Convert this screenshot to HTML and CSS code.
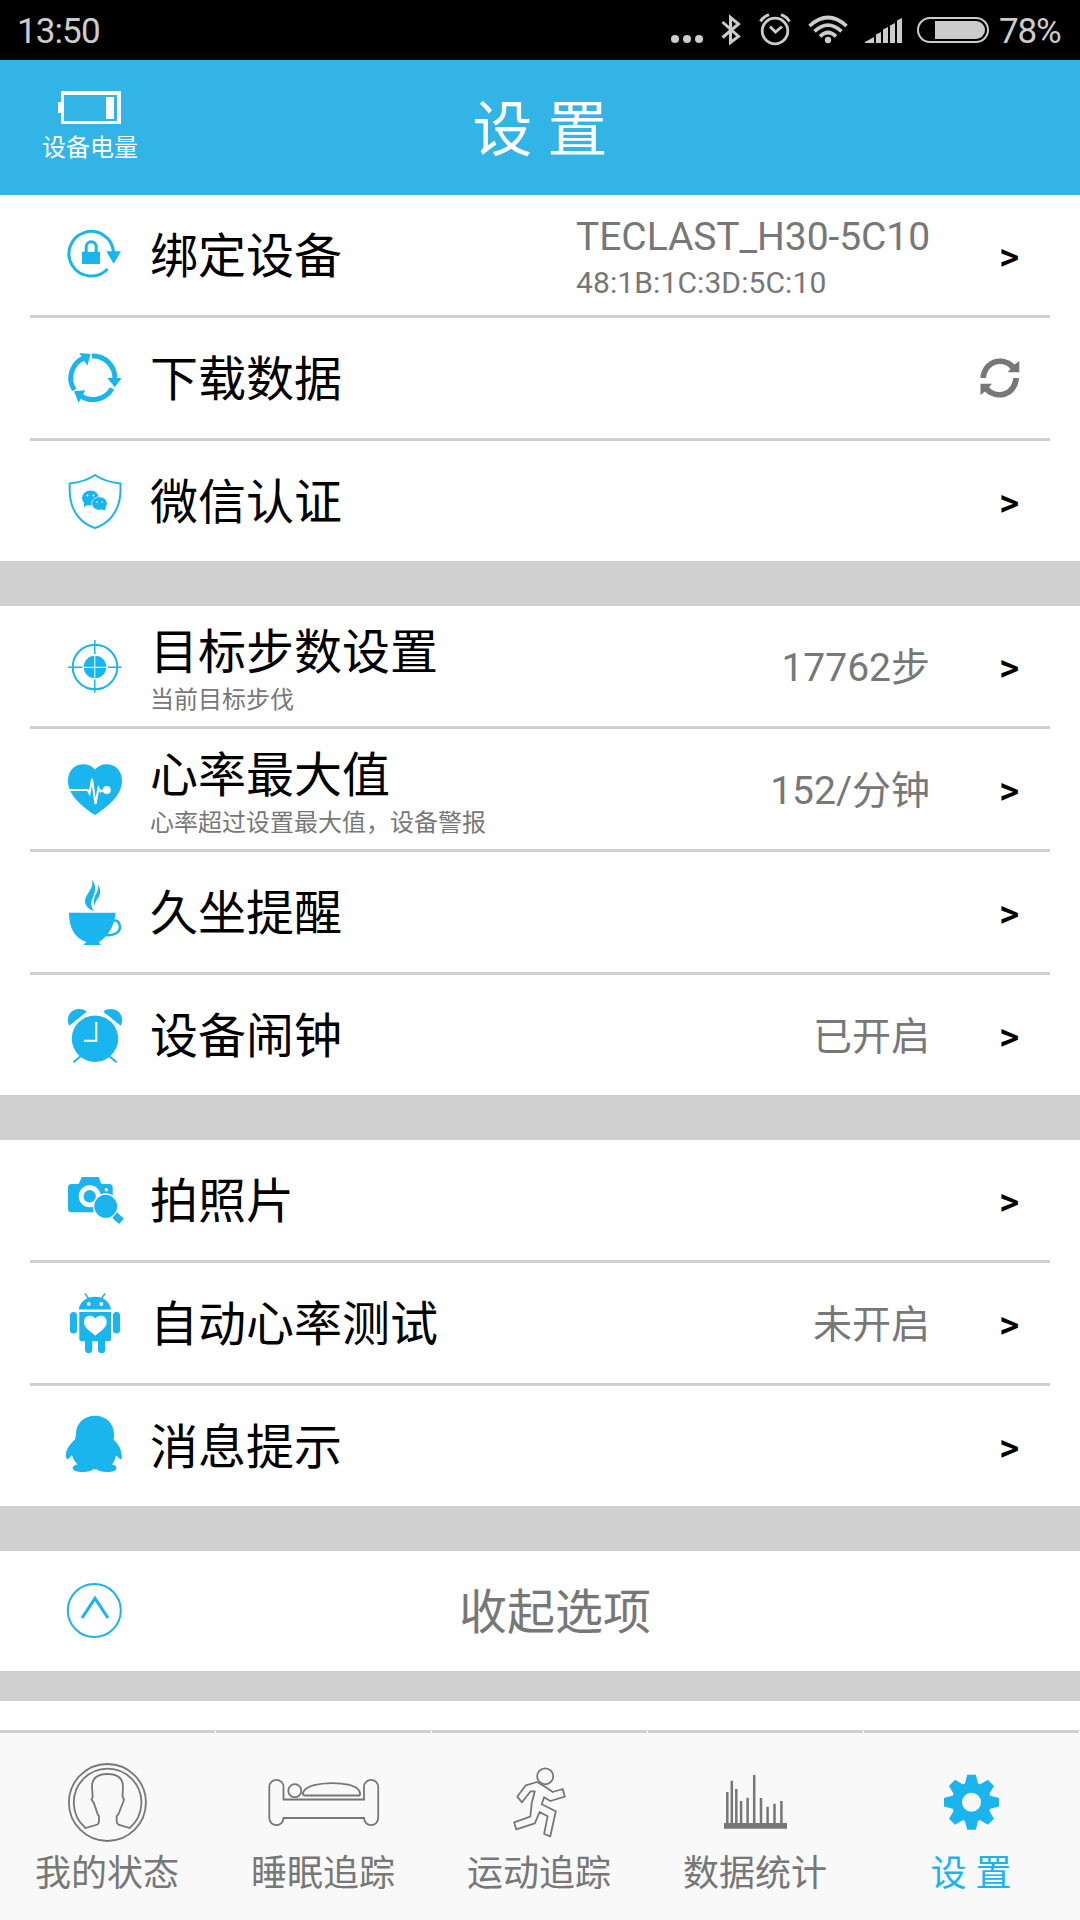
FILE: index.html
```html
<!DOCTYPE html>
<html lang="zh-CN">
<head>
  <meta charset="UTF-8">
  <meta name="viewport" content="width=device-width, initial-scale=1">
  <title>设置</title>
  <link rel="stylesheet" href="styles.css">
</head>
<body>
  <div class="status-bar">
    <span class="clock">13:50</span>
    <div class="status-icons">
      <svg width="42" height="60" viewBox="670 0 42 60"><circle cx="675" cy="39" r="4"/><circle cx="687" cy="39" r="4"/><circle cx="699" cy="39" r="4"/></svg>
      <svg width="40" height="60" viewBox="712 0 40 60"><path class="line" d="M722.5 22 738.5 36.5 730.5 42.5V17.5L738.5 24 722.5 37.5" stroke-width="3"/></svg>
      <svg width="48" height="60" viewBox="752 0 48 60"><g class="line" stroke-width="2.8"><circle cx="775" cy="31" r="12.8"/><path d="M770 26.5 775.5 32 782 26.5"/><path d="M760.5 21.5Q763 17 769 14.7M789.5 21.5Q787 17 781 14.7" stroke-width="3"/></g></svg>
      <svg width="56" height="60" viewBox="800 0 56 60"><g class="line" stroke-width="3.6"><path d="M809.5 26Q828 9 846.5 26M814.5 31.3Q828 19 841.5 31.3M820 36.5Q828 28.5 836 36.5"/></g><circle cx="828" cy="40" r="3.2"/></svg>
      <svg width="52" height="60" viewBox="856 0 52 60"><path d="M865 43V42L874 37V43zM876 43V34.5L881 32V43zM883 43V29.5L888 27V43zM890 43V25.5L895 23V43zM897 43V20.5L902 18V43z"/></svg>
      <svg width="84" height="60" viewBox="908 0 84 60"><rect class="line" x="918" y="18" width="70" height="24" rx="12" stroke-width="2"/><path d="M935 21H976A9 9 0 0 1 976 39H935z"/></svg>
    </div>
    <span class="percent">78%</span>
  </div>

  <header class="header">
    <div class="device-battery">
      <svg width="64" height="36" viewBox="58 90 64 36"><path d="M61 91H121V124H61V113H58V102H61zM64 95V121H117V95z" fill-rule="evenodd"/><rect x="106" y="97" width="8" height="22"/></svg>
      <span>设备电量</span>
    </div>
    <h1>设 置</h1>
  </header>

  <main>
    <section class="group">
      <div class="row">
        <svg class="icon" viewBox="0 0 64 120"><path class="line" d="M45.5 74A22.3 22.3 0 1 1 51.5 57" stroke-width="3"/><path d="M44.3 56.3H59L51.7 68.7zM20 56.7H38V69H20z"/><path class="line" d="M24.2 57V51.8A5 5 0 0 1 34.2 51.8V57" stroke-width="3"/></svg>
        <div class="label">绑定设备</div>
        <div class="value device">TECLAST_H30-5C10<small>48:1B:1C:3D:5C:10</small></div>
        <span class="arrow">&gt;</span>
      </div>
      <div class="row">
        <svg class="icon" viewBox="0 0 64 120"><g class="line" stroke-width="5"><path d="M30 38A21.8 21.8 0 0 1 52.8 61"/><path d="M50 70.5A21.8 21.8 0 0 1 18.5 77.6"/><path d="M12.3 72A21.8 21.8 0 0 1 23 39.6"/></g><path d="M45.3 60H59.7L52.7 69.3zM17.3 35 28.7 36 25.3 47.7zM12 73.3 23.3 72.3 16.7 84.7z"/></svg>
        <div class="label">下载数据</div>
        <svg class="refresh" width="40" height="40" viewBox="0 0 40 40"><path d="M0.3 20C1 8 10 0.5 20 0.5C26 0.5 31 3 34.5 6.5L39.3 3V14.3H27.5L30.5 11C28 7.5 24 6 20 6C13 6 7 11 6 20zM39 20C38.3 32 29.5 39.5 19.5 39.5C13.5 39.5 8.5 37 5 33.5L0.5 37V25.7H12L9 29C11.5 32.5 15.5 34 19.5 34C26.5 34 32 29 33.3 20z"/></svg>
      </div>
      <div class="row">
        <svg class="icon" viewBox="0 0 64 120"><path class="line" d="M33 34Q43 41 58.5 42.5V50C58 71 46 83 33 87C20 83 8 71 7.7 50V42.5Q23 41 33 34z" stroke-width="2"/><ellipse cx="28.5" cy="57" rx="8.5" ry="7.5"/><path d="M22 60V66L28 63z"/><ellipse cx="37.5" cy="62.5" rx="7.8" ry="6.7" stroke="#fff" stroke-width="0.7"/><path d="M39 68 43.5 69.5V65z"/><g fill="#fff"><circle cx="25.5" cy="54.5" r="1"/><circle cx="31.5" cy="54.5" r="1"/><circle cx="35" cy="61" r="0.8"/><circle cx="40" cy="61" r="0.8"/></g></svg>
        <div class="label">微信认证</div>
        <span class="arrow">&gt;</span>
      </div>
    </section>

    <section class="group">
      <div class="row">
        <svg class="icon" viewBox="0 0 64 120"><g class="line" stroke-width="1.5"><circle cx="33" cy="61" r="22.3" stroke-width="2"/><path d="M6 61.3H20.5M46 61.3H59.7M32.8 34V48M32.8 73.5V86.7"/></g><circle cx="33" cy="61" r="11.3"/><path d="M21 61.3H45M32.8 49V73" stroke="#fff"/></svg>
        <div class="label">目标步数设置<small>当前目标步伐</small></div>
        <div class="value">17762步</div>
        <span class="arrow">&gt;</span>
      </div>
      <div class="row">
        <svg class="icon" viewBox="0 0 64 120"><path d="M33 86C22 79 6 67 6 52C6 34 25 31 33 40.5C41 31 60 34 60 52C60 67 44 79 33 86z"/><path d="M6 61H25.5L27.5 64.5 30 50 33.5 75 36.5 59 38.5 62.5 42 61" fill="none" stroke="#fff" stroke-width="2"/><circle cx="44.8" cy="61" r="4" fill="#fff"/></svg>
        <div class="label">心率最大值<small>心率超过设置最大值，设备警报</small></div>
        <div class="value">152/分钟</div>
        <span class="arrow">&gt;</span>
      </div>
      <div class="row">
        <svg class="icon" viewBox="0 0 64 120"><path d="M7 60.7H53.7C52 76 45 85 37 90L39 93H21.3L24.5 90C12 86 7 75 7 60.7zM30 27.3C34 34 34 38 31.5 44C28 51 29 54 31.7 59C23 56 21 49 25 43C30 36 31 33 30 27.3zM35.7 32.3C39 38 39 42 36 46C34 49 33 51 32.3 54C31 49 32 45 34.5 41C36 38 36.5 36 35.7 32.3z"/><path class="line" d="M51 69C55 67 58 71 58 75C58 80 53 84 44 83" stroke-width="2.5"/></svg>
        <div class="label">久坐提醒</div>
        <span class="arrow">&gt;</span>
      </div>
      <div class="row">
        <svg class="icon" viewBox="0 0 64 120"><circle cx="33" cy="63.7" r="23.2"/><path d="M7.3 50.7C3 42 9 34 17 34C21 34 23 35 24.7 36.7zM58.7 50.7C63 42 57 34 49 34C45 34 43 35 41.3 36.7z"/><path class="line" d="M19 81 11.5 87.3M47 81 54.5 87.3" stroke-width="2"/><path d="M34.3 47V65.7H22" fill="none" stroke="#fff" stroke-width="2"/></svg>
        <div class="label">设备闹钟</div>
        <div class="value">已开启</div>
        <span class="arrow">&gt;</span>
      </div>
    </section>

    <section class="group">
      <div class="row">
        <svg class="icon" viewBox="0 0 64 120"><rect x="6" y="44" width="44.7" height="28.3" rx="3.5"/><path d="M19.7 37H36.7L39.7 45H16.3z"/><circle cx="27.7" cy="56.3" r="8.6" stroke="#fff" stroke-width="4.8"/><circle cx="44.3" cy="49.7" r="1.7" fill="#fff"/><circle cx="43.7" cy="66.3" r="12.2" stroke="#fff" stroke-width="1.5"/><path d="M55 72.3 62 78.7 57 84 50.3 78z"/></svg>
        <div class="label">拍照片</div>
        <span class="arrow">&gt;</span>
      </div>
      <div class="row">
        <svg class="icon" viewBox="0 0 64 120"><path d="M16.7 46.5C18 38 25 33.7 33 33.7C41 33.7 47.5 38 49 46.5z"/><path class="line" d="M23 30.5 26.5 35.5M43 30.5 39.5 35.5" stroke-width="1.5"/><path d="M17.3 49H49V76.5Q49 78.3 47 78.3H43.3V86.5A3.6 3.6 0 0 1 36 86.5V78.3H30.3V86.5A3.6 3.6 0 0 1 23 86.5V78.3H19.3Q17.3 78.3 17.3 76.5z"/><rect x="8" y="49" width="7" height="21.5" rx="3.5"/><rect x="51" y="49" width="7" height="21.5" rx="3.5"/><g fill="#fff"><circle cx="26.7" cy="41" r="1.9"/><circle cx="39.3" cy="41" r="1.9"/><path d="M33.3 72.7C29 69 22 65 22 59C22 52 30 51 33.3 55.5C36.5 51 44.7 52 44.7 59C44.7 65 37.5 69 33.3 72.7z"/></g></svg>
        <div class="label">自动心率测试</div>
        <div class="value">未开启</div>
        <span class="arrow">&gt;</span>
      </div>
      <div class="row">
        <svg class="icon" viewBox="0 0 64 120"><path d="M33 29.7C22 29.7 14 37.5 14 48C14 50 13 51.5 13 53.5C8 58 4 63 4 69C4 73 5 74 6 73C8 72 9 70 10 69C11 73 13 76 15.5 78.5C12 79 10.6 80.5 10.6 82C10.6 85 16 86 20 86C26 86 30 85 31 83.3H35C36 85 40 86 46 86C50 86 54.5 85 54.5 82C54.5 80 53 79 50 78.5C52 76 53 74 54 69.5C56 71 57 72.5 58.5 73.3C60 73.5 60 71 59.7 69C59 62 56 58 51.5 53.5C52 51 52 50 52 48C52 37.5 44 29.7 33 29.7z"/></svg>
        <div class="label">消息提示</div>
        <span class="arrow">&gt;</span>
      </div>
    </section>

    <section class="group">
      <div class="row">
        <svg class="icon" viewBox="0 0 64 120"><circle class="line" cx="32.3" cy="59.5" r="26.5" stroke-width="2"/><path class="line" d="M20 67 33 47.3 46 67" stroke-width="3"/></svg>
        <div class="collapse">收起选项</div>
      </div>
    </section>
  </main>

  <nav class="tabs">
    <div class="tab">
      <svg viewBox="0 0 121 120"><g class="line" stroke-width="1.8"><circle cx="60.4" cy="69.5" r="38.5"/><path d="M38.4 95A33.8 33.8 0 1 1 82.8 95L71.5 91.7Q69.5 90 69.7 88V83L71.5 81 76 69.5 77 66.5 75.5 63.5 76 54C76 45 70 41 60.4 41C51 41 45 45 45 54L45.7 63.5 44.6 66.5 47 70.5 50.8 81.5 52 83V88Q52 90 50.5 91.5z"/></g></svg>
      <span>我的状态</span>
    </div>
    <div class="tab">
      <svg viewBox="0 0 121 120"><g class="line" stroke-width="1.8"><path d="M6.3 54A7.1 7.1 0 0 1 20.5 54V66.5H101V54A7.1 7.1 0 0 1 115.2 54V85A7.1 7.1 0 0 1 101 85H20.5A7.1 7.1 0 0 1 6.3 85z"/><circle cx="31.8" cy="57.7" r="6.5"/><path d="M41.5 62.5Q38.5 62 41 58C47 48 89 47 96 57.5Q98 61 96.5 62.5z"/></g></svg>
      <span>睡眠追踪</span>
    </div>
    <div class="tab">
      <svg viewBox="0 0 121 120"><g class="line" stroke-width="1.8" stroke-linejoin="round"><circle cx="66.2" cy="43.3" r="8"/><path d="M58 49 46.8 52.3 38.2 63.7 43 69.3 51.6 58.3H55.8L52.7 70.3 51.3 83.7 35.1 89.3 37.2 96.3 55.8 90.3 60.6 79 68.6 83.3 65.1 101 71.3 103.3 76.8 78.3 62.7 71.3 65.1 64.3 71.3 68 85.8 63.7 83.7 56 73.7 59 66.9 54.3z"/></g></svg>
      <span>运动追踪</span>
    </div>
    <div class="tab">
      <svg viewBox="0 0 121 120"><path d="M29 90H92V95.7H29z"/><path class="line" d="M32.3 90V59M36.8 90V47.7M41.3 90V56M46.1 90V68M52.6 90V64.7M59.2 90V42M66 90V65M72.6 90V73.7M79.5 90V70.7M86.4 90V68" stroke-width="2.5"/></svg>
      <span>数据统计</span>
    </div>
    <div class="tab active">
      <svg viewBox="0 0 121 120">
        <circle class="line" cx="60.5" cy="69.3" r="14.5" stroke-width="10"/>
        <g transform="translate(60.5 69.3)">
          <path id="tooth" d="M-4.3 -27.5H4.3L6.5 -19 9 -16H-9L-6.5 -19z"/>
          <use href="#tooth" transform="rotate(45)"/>
          <use href="#tooth" transform="rotate(90)"/>
          <use href="#tooth" transform="rotate(135)"/>
          <use href="#tooth" transform="rotate(180)"/>
          <use href="#tooth" transform="rotate(225)"/>
          <use href="#tooth" transform="rotate(270)"/>
          <use href="#tooth" transform="rotate(315)"/>
        </g>
      </svg>
      <span>设 置</span>
    </div>
  </nav>
</body>
</html>
```

FILE: styles.css
```css
* {
  box-sizing: border-box;
}

body {
  margin: 0;
  width: 1080px;
  height: 1920px;
  overflow: hidden;
  display: flex;
  flex-direction: column;
  font-family: Roboto, "Noto Sans CJK SC", sans-serif;
  background-color: #fff;
  color: #000;
}

svg {
  display: block;
  fill: currentColor;
  flex: none;
}

.line {
  fill: none;
  stroke: currentColor;
}

.status-bar {
  height: 60px;
  display: flex;
  background-color: #000;
  color: #ccc;
  font-size: 35px;
  line-height: 63px;
}

.clock {
  width: 670px;
  padding-left: 17px;
  letter-spacing: -0.9px;
}

.status-icons {
  display: flex;
}

.percent {
  padding-left: 7px;
  letter-spacing: -1.2px;
}

.header {
  height: 135px;
  display: grid;
  grid-template-columns: 180px 1fr 180px;
  background-color: #33b4e6;
  color: #fff;
}

.device-battery {
  display: flex;
  flex-direction: column;
  align-items: center;
  padding-top: 30px;
  font-size: 24px;
  line-height: 36px;
}

.device-battery span {
  padding-top: 4px;
}

.header h1 {
  margin: 0;
  text-align: center;
  font-size: 60px;
  font-weight: normal;
  line-height: 141px;
}

.group {
  border-bottom: 45px solid #d0d0d0;
}

.group:last-child {
  border-bottom-width: 30px;
}

.row {
  height: 120px;
  display: flex;
  align-items: center;
  margin: 0 30px;
  padding: 0 30px 0 32px;
}

.row + .row {
  height: 123px;
  border-top: 3px solid #d0d0d0;
}

.icon {
  width: 64px;
  height: 120px;
  margin-right: 24px;
  color: #1ab4ef;
}

.label {
  flex: 1;
  padding-top: 4px;
  font-size: 48px;
  line-height: 58px;
}

.label small {
  display: block;
  margin-bottom: -5px;
  font-size: 24px;
  line-height: 36px;
  color: #777;
}

.value {
  margin-right: 69px;
  padding-top: 4px;
  font-size: 39px;
  line-height: 50px;
  color: #777;
}

.device {
  padding-top: 6px;
  letter-spacing: -0.08px;
}

.value small {
  display: block;
  font-size: 30px;
  line-height: 42px;
  letter-spacing: 0.1px;
}

.arrow {
  width: 21px;
  padding-top: 4px;
  font-size: 39px;
  font-weight: 500;
  line-height: 50px;
}

.refresh {
  color: #777;
}

.collapse {
  flex: 1;
  padding-top: 4px;
  padding-right: 60px;
  text-align: center;
  font-size: 48px;
  line-height: 54px;
  color: #777;
}

.tabs {
  height: 190px;
  margin-top: auto;
  display: flex;
  gap: 1px;
  padding-right: 1px;
  background-color: #f9f9f9;
}

.tab {
  flex: 1;
  display: flex;
  flex-direction: column;
  align-items: center;
  border-top: 3px solid #d0d0d0;
  color: #777;
  font-size: 36px;
  line-height: 42px;
}

.tab svg {
  width: 121px;
  height: 120px;
}

.tab span {
  margin-right: 1px;
}

.tab.active {
  color: #1ab4ef;
}
```
